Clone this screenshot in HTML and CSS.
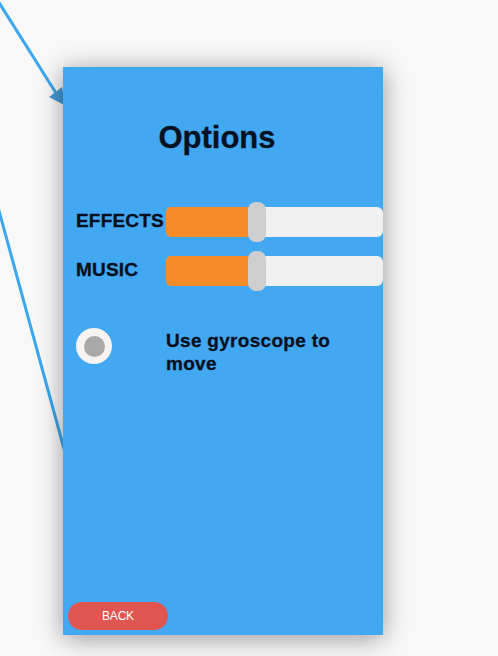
FILE: index.html
```html
<!DOCTYPE html>
<html>
<head>
<meta charset="utf-8">
<link rel="stylesheet" href="styles.css">
</head>
<body>
<svg class="links" width="498" height="656" viewBox="0 0 498 656">
  <line x1="-2" y1="1" x2="56" y2="93" stroke="#3aa7ef" stroke-width="3"/>
  <polygon points="49,97 62,87 66,106" fill="#4598d6"/>
  <line x1="-2" y1="207" x2="66" y2="456" stroke="#3aa7ef" stroke-width="3"/>
</svg>
<div class="panel">
  <h1 class="title">Options</h1>
  <div class="row">
    <span class="label">EFFECTS</span>
    <div class="slider">
      <div class="fill" style="width:86px"></div>
      <div class="thumb" style="left:82px"></div>
    </div>
  </div>
  <div class="row row-second">
    <span class="label">MUSIC</span>
    <div class="slider">
      <div class="fill" style="width:86px"></div>
      <div class="thumb" style="left:82px"></div>
    </div>
  </div>
  <div class="option">
    <div class="radio-col"><span class="radio"><span class="dot"></span></span></div>
    <span class="option-text">Use gyroscope to move</span>
  </div>
  <button class="back">BACK</button>
</div>
</body>
</html>
```
FILE: styles.css
```css
html, body {
  margin: 0;
  padding: 0;
}
body {
  background: #f8f8f8;
  width: 498px;
  height: 656px;
  overflow: hidden;
  font-family: "Liberation Sans", Arial, sans-serif;
  position: relative;
}
.links {
  position: absolute;
  left: 0;
  top: 0;
}
.panel {
  position: relative;
  z-index: 1;
  margin-left: 63px;
  margin-top: 67px;
  width: 320px;
  height: 568px;
  box-sizing: border-box;
  background: #42a8f2;
  box-shadow: 0 3px 24px rgba(0, 0, 0, 0.4);
  padding: 53px 0 5px 13px;
  display: flex;
  flex-direction: column;
}
.title {
  margin: 0 0 46px 0;
  padding-right: 25px;
  font-size: 31px;
  line-height: 36px;
  font-weight: bold;
  text-align: center;
  color: #061222;
  -webkit-text-stroke: 0.3px #061222;
}
.row {
  display: flex;
  align-items: center;
  height: 40px;
}
.row-second {
  margin-top: 9px;
}
.label {
  width: 90px;
  flex: none;
  margin-bottom: 3px;
  font-size: 19px;
  font-weight: bold;
  color: #08101e;
  white-space: nowrap;
  letter-spacing: 0.2px;
  -webkit-text-stroke: 0.3px #08101e;
}
.slider {
  position: relative;
  flex: 1;
  height: 30px;
  background: #f0f0f0;
  border-radius: 6px;
}
.fill {
  height: 100%;
  background: #f68b27;
  border-radius: 5px 0 0 5px;
}
.thumb {
  position: absolute;
  top: -5px;
  width: 18px;
  height: 40px;
  background: #cecece;
  border-radius: 8px;
}
.option {
  display: flex;
  margin-top: 37px;
}
.radio-col {
  width: 90px;
  flex: none;
}
.radio {
  width: 36px;
  height: 36px;
  border-radius: 50%;
  background: #f6f3f1;
  display: flex;
  align-items: center;
  justify-content: center;
}
.dot {
  width: 21px;
  height: 21px;
  border-radius: 50%;
  background: #a9a9a9;
}
.option-text {
  margin-top: 1px;
  width: 180px;
  font-size: 19px;
  line-height: 23px;
  font-weight: bold;
  color: #08101e;
  letter-spacing: 0.3px;
  -webkit-text-stroke: 0.3px #08101e;
}
.back {
  margin-top: auto;
  margin-left: -8px;
  width: 100px;
  height: 28px;
  border: none;
  border-radius: 14px;
  background: #e0554f;
  color: #ffffff;
  font-family: "Liberation Sans", Arial, sans-serif;
  font-size: 12px;
  padding: 0;
  letter-spacing: -0.2px;
}
```
